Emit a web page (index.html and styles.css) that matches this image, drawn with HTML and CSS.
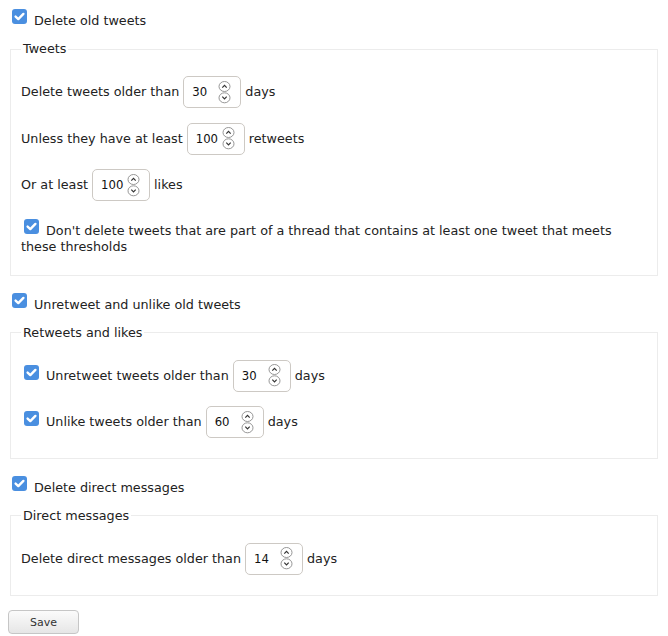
FILE: index.html
```html
<!DOCTYPE html>
<html lang="en">
<head>
    <meta charset="UTF-8">
    <title>Settings</title>
    <link rel="stylesheet" href="styles.css">
</head>
<body>
    <form class="settings">
        <!-- Delete tweets -->
        <label class="toggle">
            <svg class="check" viewBox="0 0 15 15"><rect width="15" height="15" rx="3"/><path d="M3.6 7.6 L6.3 10.1 L11.4 4.9"/></svg>
            <span>Delete old tweets</span>
        </label>
        <fieldset>
            <legend>Tweets</legend>
            <div class="rows">
                <div class="row">
                    <span>Delete tweets older than</span>
                    <span class="num"><span class="val">30</span><svg class="spin" viewBox="0 0 13 23"><ellipse cx="6.5" cy="5.5" rx="5.5" ry="5"/><ellipse cx="6.5" cy="16.8" rx="5.5" ry="5"/><path d="M4.3 6.6 L6.5 4.4 L8.7 6.6 M4.3 15.7 L6.5 17.9 L8.7 15.7"/></svg></span>
                    <span>days</span>
                </div>
                <div class="row">
                    <span>Unless they have at least</span>
                    <span class="num"><span class="val">100</span><svg class="spin" viewBox="0 0 13 23"><ellipse cx="6.5" cy="5.5" rx="5.5" ry="5"/><ellipse cx="6.5" cy="16.8" rx="5.5" ry="5"/><path d="M4.3 6.6 L6.5 4.4 L8.7 6.6 M4.3 15.7 L6.5 17.9 L8.7 15.7"/></svg></span>
                    <span>retweets</span>
                </div>
                <div class="row">
                    <span>Or at least</span>
                    <span class="num"><span class="val">100</span><svg class="spin" viewBox="0 0 13 23"><ellipse cx="6.5" cy="5.5" rx="5.5" ry="5"/><ellipse cx="6.5" cy="16.8" rx="5.5" ry="5"/><path d="M4.3 6.6 L6.5 4.4 L8.7 6.6 M4.3 15.7 L6.5 17.9 L8.7 15.7"/></svg></span>
                    <span>likes</span>
                </div>
            </div>
            <p class="thread">
                <svg class="check" viewBox="0 0 15 15"><rect width="15" height="15" rx="3"/><path d="M3.6 7.6 L6.3 10.1 L11.4 4.9"/></svg>
                Don't delete tweets that are part of a thread that contains at least one tweet that meets these thresholds
            </p>
        </fieldset>

        <!-- Retweets and likes -->
        <label class="toggle">
            <svg class="check" viewBox="0 0 15 15"><rect width="15" height="15" rx="3"/><path d="M3.6 7.6 L6.3 10.1 L11.4 4.9"/></svg>
            <span>Unretweet and unlike old tweets</span>
        </label>
        <fieldset>
            <legend>Retweets and likes</legend>
            <div class="rows">
                <div class="row">
                    <svg class="check" viewBox="0 0 15 15"><rect width="15" height="15" rx="3"/><path d="M3.6 7.6 L6.3 10.1 L11.4 4.9"/></svg>
                    <span>Unretweet tweets older than</span>
                    <span class="num"><span class="val">30</span><svg class="spin" viewBox="0 0 13 23"><ellipse cx="6.5" cy="5.5" rx="5.5" ry="5"/><ellipse cx="6.5" cy="16.8" rx="5.5" ry="5"/><path d="M4.3 6.6 L6.5 4.4 L8.7 6.6 M4.3 15.7 L6.5 17.9 L8.7 15.7"/></svg></span>
                    <span>days</span>
                </div>
                <div class="row">
                    <svg class="check" viewBox="0 0 15 15"><rect width="15" height="15" rx="3"/><path d="M3.6 7.6 L6.3 10.1 L11.4 4.9"/></svg>
                    <span>Unlike tweets older than</span>
                    <span class="num"><span class="val">60</span><svg class="spin" viewBox="0 0 13 23"><ellipse cx="6.5" cy="5.5" rx="5.5" ry="5"/><ellipse cx="6.5" cy="16.8" rx="5.5" ry="5"/><path d="M4.3 6.6 L6.5 4.4 L8.7 6.6 M4.3 15.7 L6.5 17.9 L8.7 15.7"/></svg></span>
                    <span>days</span>
                </div>
            </div>
        </fieldset>

        <!-- Direct messages -->
        <label class="toggle">
            <svg class="check" viewBox="0 0 15 15"><rect width="15" height="15" rx="3"/><path d="M3.6 7.6 L6.3 10.1 L11.4 4.9"/></svg>
            <span>Delete direct messages</span>
        </label>
        <fieldset>
            <legend>Direct messages</legend>
            <div class="rows">
                <div class="row">
                    <span>Delete direct messages older than</span>
                    <span class="num"><span class="val">14</span><svg class="spin" viewBox="0 0 13 23"><ellipse cx="6.5" cy="5.5" rx="5.5" ry="5"/><ellipse cx="6.5" cy="16.8" rx="5.5" ry="5"/><path d="M4.3 6.6 L6.5 4.4 L8.7 6.6 M4.3 15.7 L6.5 17.9 L8.7 15.7"/></svg></span>
                    <span>days</span>
                </div>
            </div>
        </fieldset>

        <button type="button" class="btn">Save</button>
    </form>
</body>
</html>
```
FILE: styles.css
```css
body {
    margin: 8px;
    font-family: "DejaVu Sans", sans-serif;
    font-size: 12.75px;
    line-height: 16px;
    color: #222;
    background: #fff;
}

.toggle {
    display: flex;
    align-items: flex-start;
    gap: 7px;
    margin: 5px 0 12px 4px;
}

.toggle .check {
    margin-top: -4px;
}

fieldset {
    margin: 0 2px 20.5px 2px;
    padding: 19px 10px 20px 10px;
    border: 1px solid #ececec;
}

legend {
    padding: 0 2px;
}

.check {
    flex: none;
    width: 15px;
    height: 15px;
}

.check rect {
    fill: #4a8fe0;
}

.check path {
    fill: none;
    stroke: #fff;
    stroke-width: 2.4;
    stroke-linecap: round;
    stroke-linejoin: round;
}

.rows {
    display: flex;
    flex-direction: column;
    gap: 14.5px;
}

.row {
    display: flex;
    align-items: center;
    gap: 4px;
}

.row .check {
    margin: 0 3px 7px 3px;
}

.num {
    display: inline-flex;
    align-items: center;
    box-sizing: border-box;
    width: 58px;
    height: 32px;
    padding: 0 9px 0 8px;
    border: 1px solid #cdc9c4;
    border-radius: 5px;
    font-size: 11.7px;
    color: #111;
}

.num .val {
    flex: 1;
}

.spin {
    flex: none;
    width: 13px;
    height: 23px;
}

.spin ellipse {
    fill: #fff;
    stroke: #8a8a8a;
    stroke-width: 0.9;
}

.spin path {
    fill: none;
    stroke: #333;
    stroke-width: 1.2;
}

.thread {
    margin: 18px 0 0 0;
}

.thread .check {
    margin: 0 3px 0 3px;
    vertical-align: 1px;
}

.btn {
    display: block;
    width: 71px;
    height: 24px;
    padding: 0;
    margin-top: -6px;
    font-family: "DejaVu Sans", sans-serif;
    font-size: 11px;
    color: #333;
    background: linear-gradient(#fbfbfb, #e6e6e6);
    border: 1px solid #c6c6c6;
    border-radius: 4px;
}
```
